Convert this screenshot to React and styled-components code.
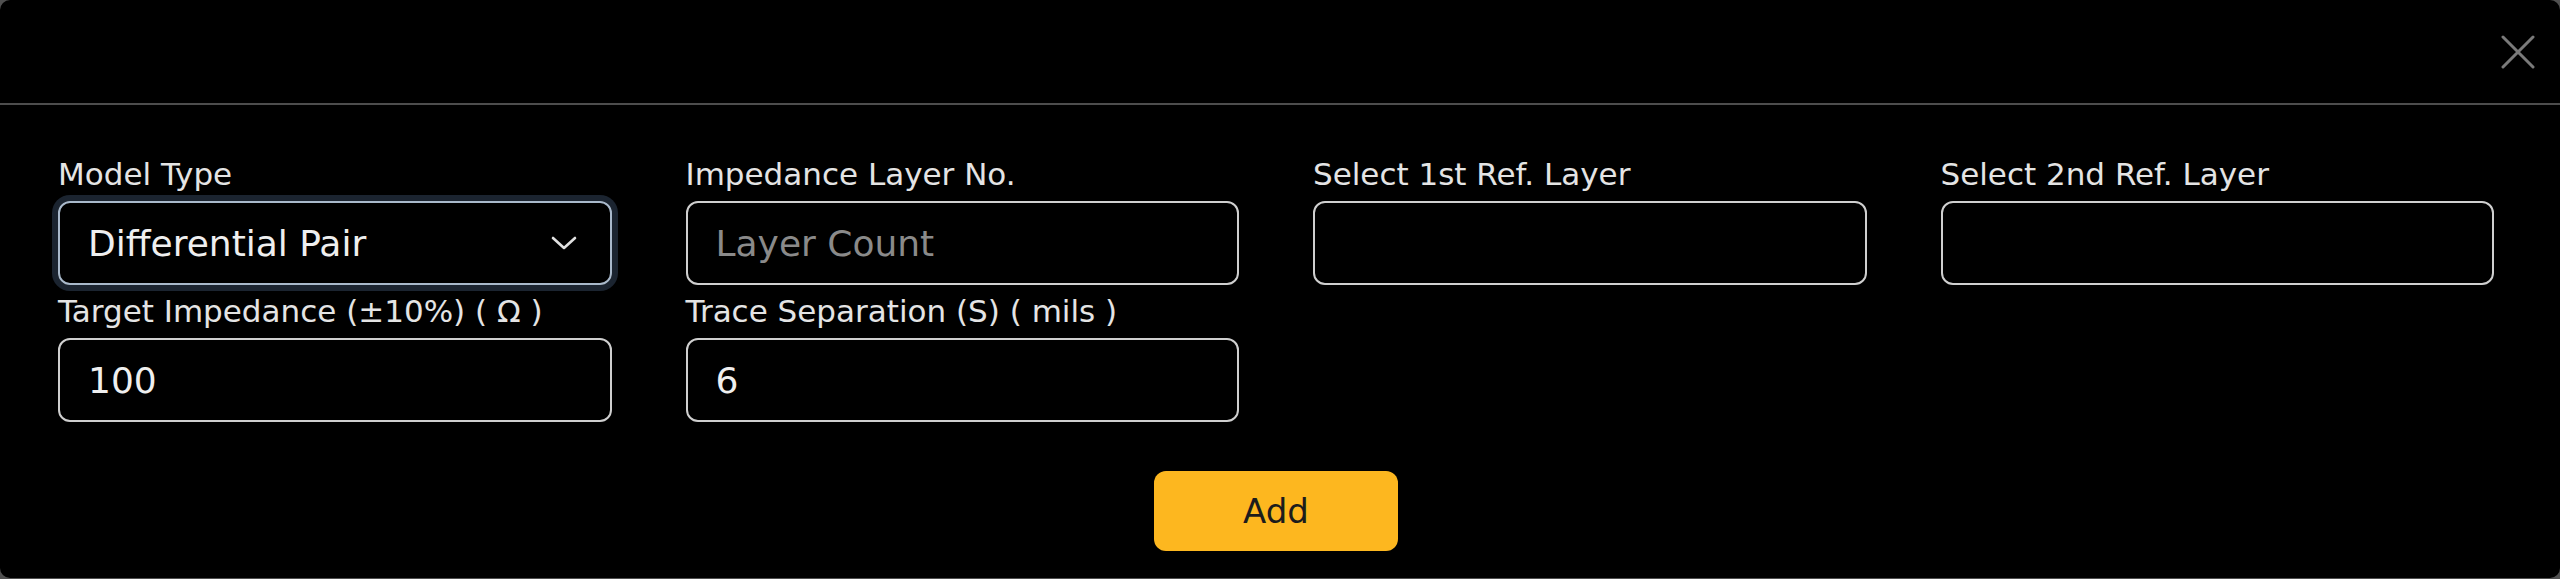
import React from "react";
import styled, { createGlobalStyle } from "styled-components";

const GlobalStyle = createGlobalStyle`
  html, body {
    margin: 0;
    padding: 0;
    background: #505050;
  }
  * {
    box-sizing: border-box;
  }
`;

const Modal = styled.div`
  width: 2560px;
  height: 578px;
  background: #000;
  border-radius: 10px;
  font-family: "DejaVu Sans", "Noto Sans", sans-serif;
  overflow: hidden;
`;

const Header = styled.div`
  display: flex;
  justify-content: flex-end;
  align-items: center;
  height: 105px;
  padding-right: 25px;
  border-bottom: 2px solid #4d4d4d;
`;

const CloseButton = styled.button`
  display: flex;
  padding: 0;
  border: none;
  background: transparent;
  cursor: pointer;
`;

const Body = styled.div`
  padding: 51px 66px 0 58px;
`;

const Grid = styled.div`
  display: grid;
  grid-template-columns: repeat(4, 1fr);
  column-gap: 74px;
  row-gap: 8px;
`;

const Field = styled.div`
  display: flex;
  flex-direction: column;
  gap: 9px;
`;

const Label = styled.label`
  font-size: 31px;
  line-height: 36px;
  color: #e4e4e4;
  white-space: nowrap;
`;

const Input = styled.input`
  width: 100%;
  height: 84px;
  padding: 0 28px;
  background: #000;
  border: 2px solid #cfcfcf;
  border-radius: 12px;
  font-family: inherit;
  font-size: 36px;
  color: #efefef;
  outline: none;

  &::placeholder {
    color: #8a8a8a;
  }
`;

const SelectBox = styled.div`
  display: flex;
  justify-content: space-between;
  align-items: center;
  height: 84px;
  padding: 0 33px 0 28px;
  border: 2px solid #a9b9cb;
  border-radius: 12px;
  box-shadow: 0 0 0 6px #1b2430;
  font-size: 36px;
  color: #efefef;
`;

const Footer = styled.div`
  display: flex;
  justify-content: center;
  padding-top: 49px;
`;

const AddButton = styled.button`
  width: 244px;
  height: 80px;
  border: none;
  border-radius: 12px;
  background: #fdb71f;
  color: #1c1c1c;
  font-family: inherit;
  font-size: 34px;
  cursor: pointer;
`;

const Chevron = () => (
  <svg width="26" height="14" viewBox="0 0 26 14" fill="none">
    <polyline
      points="2,2 13,12 24,2"
      stroke="#e0e0e0"
      strokeWidth="2.6"
      strokeLinecap="round"
      strokeLinejoin="round"
    />
  </svg>
);

const CloseIcon = () => (
  <svg width="34" height="34" viewBox="0 0 34 34" fill="none">
    <path
      d="M2 2 L32 32 M32 2 L2 32"
      stroke="#7a7a7a"
      strokeWidth="3"
      strokeLinecap="round"
    />
  </svg>
);

const App = () => {
  return (
    <>
      <GlobalStyle />
      <Modal>
        <Header>
          <CloseButton aria-label="Close">
            <CloseIcon />
          </CloseButton>
        </Header>
        <Body>
          <Grid>
            <Field>
              <Label>Model Type</Label>
              <SelectBox>
                <span>Differential Pair</span>
                <Chevron />
              </SelectBox>
            </Field>
            <Field>
              <Label>Impedance Layer No.</Label>
              <Input placeholder="Layer Count" readOnly />
            </Field>
            <Field>
              <Label>Select 1st Ref. Layer</Label>
              <Input readOnly />
            </Field>
            <Field>
              <Label>Select 2nd Ref. Layer</Label>
              <Input readOnly />
            </Field>
            <Field>
              <Label>Target Impedance (±10%) ( Ω )</Label>
              <Input value="100" readOnly />
            </Field>
            <Field>
              <Label>Trace Separation (S) ( mils )</Label>
              <Input value="6" readOnly />
            </Field>
          </Grid>
          <Footer>
            <AddButton>Add</AddButton>
          </Footer>
        </Body>
      </Modal>
    </>
  );
};

export default App;
